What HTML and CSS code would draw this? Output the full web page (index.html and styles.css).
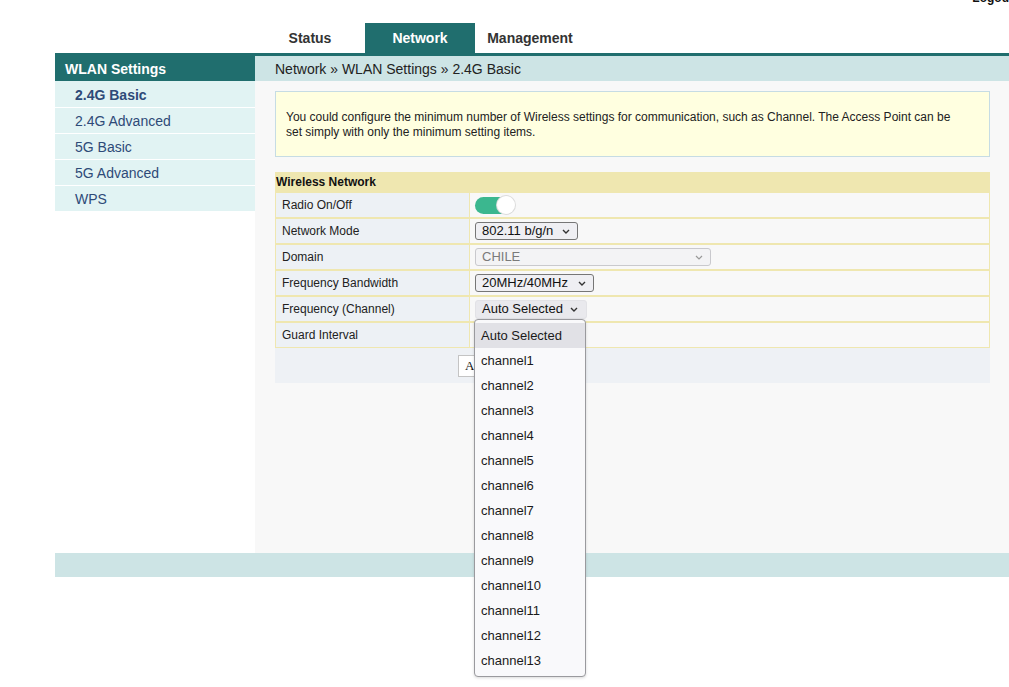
FILE: index.html
```html
<!DOCTYPE html>
<html>
<head>
<meta charset="utf-8">
<title>WLAN Settings</title>
<link rel="stylesheet" href="styles.css">
</head>
<body>
<div class="topbar"><span class="logout">Logout</span></div>
<nav class="tabs">
  <span class="tab">Status</span>
  <span class="tab active">Network</span>
  <span class="tab">Management</span>
</nav>
<div class="main">
  <aside class="sidebar">
    <div class="side-head">WLAN Settings</div>
    <div class="side-item current">2.4G Basic</div>
    <div class="side-item">2.4G Advanced</div>
    <div class="side-item">5G Basic</div>
    <div class="side-item">5G Advanced</div>
    <div class="side-item">WPS</div>
  </aside>
  <section class="content">
    <div class="crumb">Network » WLAN Settings » 2.4G Basic</div>
    <div class="body">
      <div class="info">You could configure the minimum number of Wireless settings for communication, such as Channel. The Access Point can be set simply with only the minimum setting items.</div>
      <table class="settings">
        <tr><th colspan="2">Wireless Network</th></tr>
        <tr><td class="lbl">Radio On/Off</td><td class="val"><span class="toggle"><span class="knob"></span></span></td></tr>
        <tr><td class="lbl">Network Mode</td><td class="val"><span class="sel w-mode"><span>802.11 b/g/n</span><svg class="chev" width="8" height="5" viewBox="0 0 8 5"><path d="M1 1l3 3 3-3" fill="none" stroke="#333" stroke-width="1.4"/></svg></span></td></tr>
        <tr><td class="lbl">Domain</td><td class="val"><span class="sel w-domain disabled"><span>CHILE</span><svg class="chev" width="8" height="5" viewBox="0 0 8 5"><path d="M1 1l3 3 3-3" fill="none" stroke="#999" stroke-width="1.2"/></svg></span></td></tr>
        <tr><td class="lbl">Frequency Bandwidth</td><td class="val"><span class="sel w-bw"><span>20MHz/40MHz</span><svg class="chev" width="8" height="5" viewBox="0 0 8 5"><path d="M1 1l3 3 3-3" fill="none" stroke="#333" stroke-width="1.4"/></svg></span></td></tr>
        <tr><td class="lbl">Frequency (Channel)</td><td class="val"><span class="sel-wrap"><span class="sel w-freq open"><span>Auto Selected</span><svg class="chev" width="8" height="5" viewBox="0 0 8 5"><path d="M1 1l3 3 3-3" fill="none" stroke="#333" stroke-width="1.4"/></svg></span>
          <ul class="dropdown">
            <li class="hl">Auto Selected</li>
            <li>channel1</li><li>channel2</li><li>channel3</li><li>channel4</li><li>channel5</li><li>channel6</li><li>channel7</li><li>channel8</li><li>channel9</li><li>channel10</li><li>channel11</li><li>channel12</li><li>channel13</li>
          </ul></span></td></tr>
        <tr><td class="lbl">Guard Interval</td><td class="val"></td></tr>
      </table>
      <div class="actions"><button class="btn">Apply</button></div>
    </div>
  </section>
</div>
<div class="footer"></div>
</body>
</html>
```
FILE: styles.css
```css
html, body {
  margin: 0;
  padding: 0;
  height: 100%;
  background: #fff;
  overflow: hidden;
  font-family: "Liberation Sans", Arial, sans-serif;
  color: #222;
}
.topbar {
  height: 23px;
  display: flex;
  justify-content: flex-end;
  margin-right: -4px;
}
.logout {
  font-weight: bold;
  font-size: 12px;
  line-height: 14px;
  margin-top: -9px;
  color: #111;
}
.tabs {
  display: flex;
  height: 30px;
  padding-left: 255px;
}
.tab {
  width: 110px;
  text-align: center;
  font-weight: bold;
  font-size: 14px;
  line-height: 30px;
  color: #333;
}
.tab.active {
  background: #206e6e;
  color: #fff;
}
.main {
  margin-left: 55px;
  border-top: 3px solid #206e6e;
  display: grid;
  grid-template-columns: 200px 1fr;
  height: 497px;
}
.sidebar {
  background: #fff;
}
.side-head {
  background: #206e6e;
  color: #fff;
  font-weight: bold;
  font-size: 14px;
  height: 24px;
  line-height: 24px;
  padding-top: 1px;
  padding-left: 10px;
}
.side-item {
  background: #e1f3f3;
  color: #2e4a78;
  font-size: 14px;
  height: 25px;
  line-height: 27px;
  padding-left: 20px;
  border-top: 1px solid #fff;
}
.side-item.current {
  font-weight: bold;
  border-top: 0;
  height: 26px;
  line-height: 28px;
}
.content {
  background: #f8f8f8;
}
.crumb {
  background: #cde4e5;
  height: 24px;
  padding-top: 1px;
  line-height: 24px;
  font-size: 14px;
  padding-left: 20px;
  color: #222;
}
.body {
  padding: 10px 19px 0 20px;
}
.info {
  background: #ffffe0;
  border: 1px solid #c6dce4;
  padding: 18px 30px 16px 10px;
  font-size: 12px;
  line-height: 15px;
  color: #222;
}
.settings {
  margin-top: 15px;
  width: 100%;
  border-collapse: separate;
  border-spacing: 1px 2px;
  background: #efe7b0;
  font-size: 12px;
  margin-bottom: -1px;
}
.settings th {
  text-align: left;
  font-weight: bold;
  height: 17px;
  padding: 0;
  line-height: 17px;
  color: #111;
}
.settings td {
  height: 24px;
  padding: 0;
  vertical-align: middle;
}
.lbl {
  width: 187px;
  background: #edf1f5;
  padding-left: 6px !important;
  color: #222;
}
.val {
  background: #f8f8f8;
  padding-left: 5px !important;
  line-height: 0;
}
.toggle {
  display: inline-flex;
  justify-content: flex-end;
  align-items: center;
  width: 40px;
  height: 17px;
  border-radius: 9px;
  background: #3bb78f;
  vertical-align: middle;
}
.knob {
  width: 18px;
  height: 18px;
  border-radius: 50%;
  background: #fff;
  box-shadow: 0 0 0 1px #dcdcdc;
}
.sel {
  display: inline-flex;
  align-items: center;
  justify-content: space-between;
  box-sizing: border-box;
  height: 18px;
  border: 1px solid #767676;
  border-radius: 3px;
  background: #efeff3;
  font-size: 13px;
  line-height: 16px;
  padding: 0 7px 0 6px;
  color: #111;
  vertical-align: middle;
}
.sel.disabled {
  border-color: #c9c9cd;
  background: #f3f3f5;
  color: #7a7a7a;
}
.sel.open {
  border-color: #e2e2e6;
  background: #e9e9ed;
  height: 19px;
  padding-right: 8px;
}
.w-mode { width: 103px; }
.w-domain { width: 236px; }
.w-bw { width: 119px; }
.w-freq { width: 112px; }
.sel-wrap {
  position: relative;
  display: inline-block;
  vertical-align: middle;
  line-height: 0;
}
.dropdown {
  position: absolute;
  top: 19px;
  left: -1px;
  width: 112px;
  box-sizing: border-box;
  margin: 0;
  padding: 3px 0;
  list-style: none;
  background: #f9f9fb;
  border: 1px solid #9a9a9e;
  border-radius: 4px;
  box-shadow: 0 1px 3px rgba(0,0,0,0.15);
  z-index: 10;
}
.dropdown li {
  height: 25px;
  line-height: 25px;
  font-size: 13px;
  padding-left: 6px;
  color: #1a1a1a;
}
.dropdown li.hl {
  background: #e1e1e6;
}
.actions {
  background: #eef1f5;
  height: 35px;
  padding-left: 183px;
  display: flex;
  align-items: center;
}
.btn {
  font-family: "Liberation Serif", "Times New Roman", serif;
  font-size: 13px;
  background: #fff;
  border: 1px solid #c4c4c4;
  height: 22px;
  padding: 0 6px;
  color: #111;
}
.footer {
  margin-left: 55px;
  height: 24px;
  background: #cde4e5;
}
```
